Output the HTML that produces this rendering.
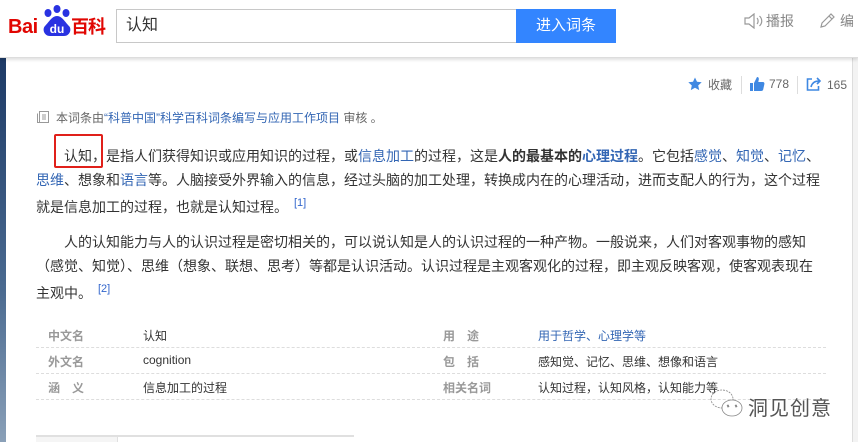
<!DOCTYPE html>
<html><head><meta charset="utf-8"><style>
*{margin:0;padding:0;box-sizing:border-box}
body{width:858px;height:442px;overflow:hidden;background:#fff;font-family:"Liberation Sans","Noto Sans CJK SC",sans-serif;position:relative;color:#333}
.hdr{position:absolute;left:0;top:0;width:858px;height:58px;background:#fff;border-bottom:1px solid #ddd;box-shadow:0 2px 3px rgba(0,0,0,.12);z-index:2}
.abs{position:absolute}
.side{position:absolute;left:0;top:58px;width:6px;height:384px;background:linear-gradient(#1d3a66,#4a6a90 60%,#8aa0b8)}
.rline{position:absolute;left:852px;top:58px;width:6px;height:384px;background:#f3f3f3;border-left:1px solid #ddd}
a{color:#3366b4;text-decoration:none}
.p{position:absolute;left:36px;width:786px;font-size:14px;line-height:23.5px;color:#333;text-indent:28px}
sup{color:#3366cc;font-size:11px;vertical-align:6px;margin-left:6px}
.t{position:absolute;font-size:12px;color:#333}
.lb{color:#999;font-weight:bold}
.dl{position:absolute;left:36px;width:790px;border-top:1px dashed #ddd;height:0}
</style></head><body>
<div class="hdr">
  <div class="abs" style="left:8px;top:16px;font:bold 20px 'Liberation Sans',sans-serif;color:#e10602;letter-spacing:-0.5px">Bai</div>
  <svg class="abs" style="left:41px;top:4px" width="32" height="34" viewBox="0 0 32 34">
    <ellipse cx="16" cy="5" rx="3.5" ry="4" fill="#2932e1"/>
    <ellipse cx="7" cy="9" rx="3.5" ry="4" fill="#2932e1"/>
    <ellipse cx="25" cy="9" rx="3.5" ry="4" fill="#2932e1"/>
    <path d="M16 12c-5 0-8 6-12 10-3 3-1 10 5 10h14c6 0 8-7 5-10-4-4-7-10-12-10z" fill="#2932e1"/>
    <text x="16" y="29" font-family="Liberation Sans" font-weight="bold" font-size="12" fill="#fff" text-anchor="middle">du</text>
  </svg>
  <div class="abs" style="left:71px;top:13px;font:bold 18px 'Noto Sans CJK SC',sans-serif;color:#e10602;letter-spacing:-1px">百科</div>
  <div class="abs" style="left:116px;top:9px;width:402px;height:34px;border:1px solid #c8c8c8;border-right:none;font-size:16px;line-height:32px;padding-left:9px;color:#333">认知</div>
  <div class="abs" style="left:516px;top:9px;width:100px;height:34px;background:#3385ff;color:#fff;font-size:15px;line-height:34px;text-align:center">进入词条</div>
  <svg class="abs" style="left:743px;top:13px" width="22" height="16" viewBox="0 0 22 16" fill="none" stroke="#999" stroke-width="1.2"><path d="M2 5h4l5-4v14l-5-4H2z"/><path d="M14 5c1.5 1.5 1.5 4.5 0 6M16.5 3c3 3 3 7 0 10"/></svg>
  <div class="abs" style="left:766px;top:11px;font-size:14px;color:#888">播报</div>
  <svg class="abs" style="left:818px;top:12px" width="18" height="18" viewBox="0 0 18 18" fill="none" stroke="#999" stroke-width="1.2"><path d="M3 15l1-4 9-9 3 3-9 9z M11 4l3 3"/></svg>
  <div class="abs" style="left:840px;top:11px;font-size:14px;color:#888">编</div>
</div>
<div class="side"></div>
<div class="rline"></div>

<svg class="abs" style="left:688px;top:77px" width="14" height="14" viewBox="0 0 14 14"><path d="M7 0.5l2 4.3 4.7.5-3.5 3.2 1 4.6L7 10.7 2.8 13.1l1-4.6L.3 5.3 5 4.8z" fill="#3f88e2"/></svg>
<div class="abs" style="left:708px;top:76px;font-size:12px;color:#666">收藏</div>
<div class="abs" style="left:741px;top:76px;width:1px;height:18px;background:#ddd"></div>
<svg class="abs" style="left:749px;top:76px" width="16" height="16" viewBox="0 0 16 16"><path d="M1 7h3v8H1z M5 7l3-6c1.5 0 2 1 1.8 2.5L9.3 6H14c1 0 1.6 1 1.4 2l-1.2 5.5c-.2 1-1 1.5-2 1.5H5z" fill="#3f88e2"/></svg>
<div class="abs" style="left:769px;top:77px;font-size:12px;color:#666">778</div>
<div class="abs" style="left:797px;top:76px;width:1px;height:18px;background:#ddd"></div>
<svg class="abs" style="left:806px;top:77px" width="16" height="14" viewBox="0 0 16 14" fill="none" stroke="#3f88e2" stroke-width="1.6"><path d="M6 2H1.5v11h11V9"/><path d="M5 10c1-4 4-6 8-6" /><path d="M11 1l3 3-3 3" /></svg>
<div class="abs" style="left:827px;top:78px;font-size:12px;color:#666">165</div>

<svg class="abs" style="left:37px;top:111px" width="12" height="12" viewBox="0 0 12 12" fill="none" stroke="#999"><rect x="2.5" y=".5" width="9" height="11"/><path d="M.5 2.5v9h2M5 4h4M5 6h4M5 8h4"/></svg>
<div class="abs" style="left:56px;top:109px;font-size:12px;color:#666">本词条由<a>“科普中国”科学百科词条编写与应用工作项目</a> 审核 。</div>

<div class="abs" style="left:54px;top:134px;width:49px;height:34px;border:2px solid #e0201a;border-radius:2px"></div>
<div class="p" style="top:145px">认知，是指人们获得知识或应用知识的过程，或<a>信息加工</a>的过程，这是<b>人的最基本的<a>心理过程</a></b>。它包括<a>感觉</a>、<a>知觉</a>、<a>记忆</a>、<a>思维</a>、想象和<a>语言</a>等。人脑接受外界输入的信息，经过头脑的加工处理，转换成内在的心理活动，进而支配人的行为，这个过程就是信息加工的过程，也就是认知过程。<sup>[1]</sup></div>
<div class="p" style="top:231px">人的认知能力与人的认识过程是密切相关的，可以说认知是人的认识过程的一种产物。一般说来，人们对客观事物的感知（感觉、知觉）、思维（想象、联想、思考）等都是认识活动。认识过程是主观客观化的过程，即主观反映客观，使客观表现在主观中。<sup>[2]</sup></div>

<div class="t lb" style="left:48px;top:327px">中文名</div><div class="t" style="left:143px;top:327px">认知</div>
<div class="t lb" style="left:443px;top:327px">用　途</div><div class="t" style="left:538px;top:327px"><a>用于哲学、心理学等</a></div>
<div class="dl" style="top:347px"></div>
<div class="t lb" style="left:48px;top:353px">外文名</div><div class="t" style="left:143px;top:353px">cognition</div>
<div class="t lb" style="left:443px;top:353px">包　括</div><div class="t" style="left:538px;top:353px">感知觉、记忆、思维、想像和语言</div>
<div class="dl" style="top:373px"></div>
<div class="t lb" style="left:48px;top:379px">涵　义</div><div class="t" style="left:143px;top:379px">信息加工的过程</div>
<div class="t lb" style="left:443px;top:379px">相关名词</div><div class="t" style="left:538px;top:379px">认知过程，认知风格，认知能力等</div>
<div class="dl" style="top:399px"></div>

<div class="abs" style="left:36px;top:435px;width:318px;height:2px;background:#e0e0e0"></div>
<div class="abs" style="left:36px;top:437px;width:82px;height:5px;background:#f5f5f5;border-right:1px solid #e0e0e0"></div>

<svg class="abs" style="left:708px;top:387px" width="36" height="34" viewBox="0 0 36 34" fill="none" stroke="#888" stroke-width="0.8" stroke-dasharray="2 1"><ellipse cx="14" cy="12" rx="11" ry="9"/><ellipse cx="24" cy="21" rx="10" ry="8" fill="#fff" stroke-dasharray="none"/><circle cx="20" cy="19" r="1" fill="#888"/><circle cx="28" cy="19" r="1" fill="#888"/></svg>
<div class="abs" style="left:748px;top:392px;font-size:20px;color:#555;letter-spacing:1px">洞见创意</div>
</body></html>
